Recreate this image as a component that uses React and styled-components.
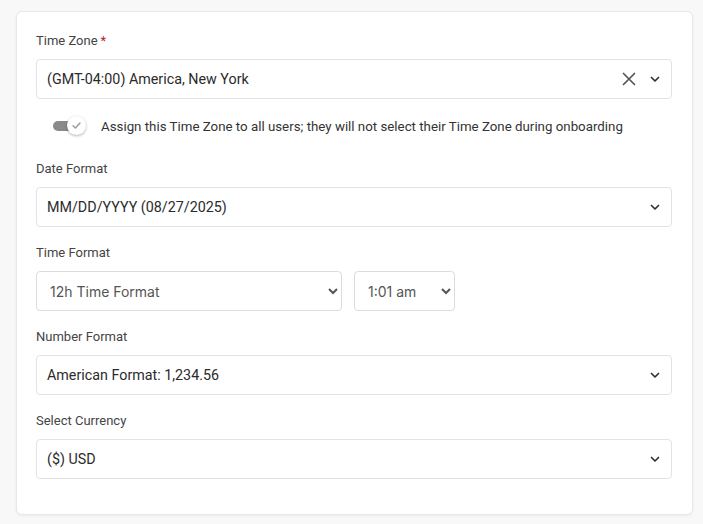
import React from 'react'
import styled, { createGlobalStyle } from 'styled-components';

const GlobalStyle = createGlobalStyle`
    body {
        margin: 0;
        background: #f8f8f8;
        font-family: Roboto, "Liberation Sans", sans-serif;
    }
`;

const Page = styled.div`
    padding: 11px 10px 9px 16px;
`;

const Card = styled.div`
    background: #fff;
    border: 1px solid #e8e8e8;
    border-radius: 6px;
    box-shadow: 0 1px 3px rgba(0,0,0,0.06);
    padding: 20px 20px 18px 19px;
`;

const Field = styled.div`
    margin-bottom: 17px;
`;

const Label = styled.div`
    font-size: 13px;
    line-height: 18px;
    color: #444;
    margin-bottom: 9px;
`;

const Required = styled.span`
    color: #b3261e;
    margin-left: 3px;
`;

const SelectBox = styled.div`
    display: flex;
    align-items: center;
    height: 40px;
    box-sizing: border-box;
    border: 1px solid #e3e3e3;
    border-radius: 4px;
    padding: 0 6px 0 10px;
    font-size: 14.3px;
    color: #2b2b2b;
`;

const Value = styled.div`
    flex: 1;
`;

const IconBtn = styled.span`
    display: flex;
    align-items: center;
    justify-content: center;
    width: 20px;
    margin-left: ${({ $gap }) => $gap || 0}px;
`;

const ToggleRow = styled.div`
    display: flex;
    align-items: center;
    gap: 15px;
    padding-left: 17px;
    margin: 15px 0 22px;
    font-size: 13.3px;
    color: #333;
`;

const Toggle = styled.div`
    position: relative;
    width: 33px;
    height: 24px;
    flex-shrink: 0;
`;

const Track = styled.div`
    position: absolute;
    left: 0;
    top: 7px;
    width: 26px;
    height: 10px;
    border-radius: 5px;
    background: #8a8a8a;
`;

const Knob = styled.div`
    position: absolute;
    left: 14px;
    top: 2px;
    width: 19px;
    height: 19px;
    border-radius: 50%;
    background: #fff;
    box-shadow: 0 1px 3px rgba(0,0,0,0.3);
    display: flex;
    align-items: center;
    justify-content: center;
`;

const Row = styled.div`
    display: flex;
    gap: 12px;
`;

const NativeSelect = styled.select`
    display: block;
    width: ${({ $w }) => $w}px;
    height: 40px;
    border: 1px solid #dcdcdc;
    border-radius: 4px;
    background: #fff;
    padding: 0 8px 0 9px;
    font-family: Inter, "Liberation Sans", sans-serif;
    font-size: 14px;
    color: #555;
    outline: none;
`;

const Chevron = () => (
  <svg width="12" height="12" viewBox="0 0 12 12">
    <path d="M2.5 4.5 L6 8 L9.5 4.5" fill="none" stroke="#333" strokeWidth="1.7" strokeLinecap="round" strokeLinejoin="round" />
  </svg>
);

const Close = () => (
  <svg width="14" height="14" viewBox="0 0 14 14">
    <path d="M1.5 1.5 L12.5 12.5 M12.5 1.5 L1.5 12.5" fill="none" stroke="#555" strokeWidth="1.7" strokeLinecap="round" />
  </svg>
);

const Check = () => (
  <svg width="11" height="11" viewBox="0 0 11 11">
    <path d="M2 5.8 L4.4 8 L9 3" fill="none" stroke="#9a9a9a" strokeWidth="1.4" strokeLinecap="round" strokeLinejoin="round" />
  </svg>
);

const Dropdown = ({ value, clearable }) => (
  <SelectBox>
    <Value>{value}</Value>
    {clearable && <IconBtn><Close /></IconBtn>}
    <IconBtn $gap={6}><Chevron /></IconBtn>
  </SelectBox>
);

const App = () => {
  return (
    <Page>
      <GlobalStyle />
      <Card>
        <Label>Time Zone<Required>*</Required></Label>
        <Dropdown value="(GMT-04:00) America, New York" clearable />
        <ToggleRow>
          <Toggle>
            <Track />
            <Knob><Check /></Knob>
          </Toggle>
          Assign this Time Zone to all users; they will not select their Time Zone during onboarding
        </ToggleRow>

        <Field>
          <Label>Date Format</Label>
          <Dropdown value="MM/DD/YYYY (08/27/2025)" />
        </Field>

        <Field>
          <Label>Time Format</Label>
          <Row>
            <NativeSelect $w={306} defaultValue="12h">
              <option value="12h">12h Time Format</option>
              <option value="24h">24h Time Format</option>
            </NativeSelect>
            <NativeSelect $w={101} defaultValue="1:01 am">
              <option>1:01 am</option>
              <option>1:01 pm</option>
            </NativeSelect>
          </Row>
        </Field>

        <Field>
          <Label>Number Format</Label>
          <Dropdown value="American Format: 1,234.56" />
        </Field>

        <Field>
          <Label>Select Currency</Label>
          <Dropdown value="($) USD" />
        </Field>
      </Card>
    </Page>
  )
}

export default App;
